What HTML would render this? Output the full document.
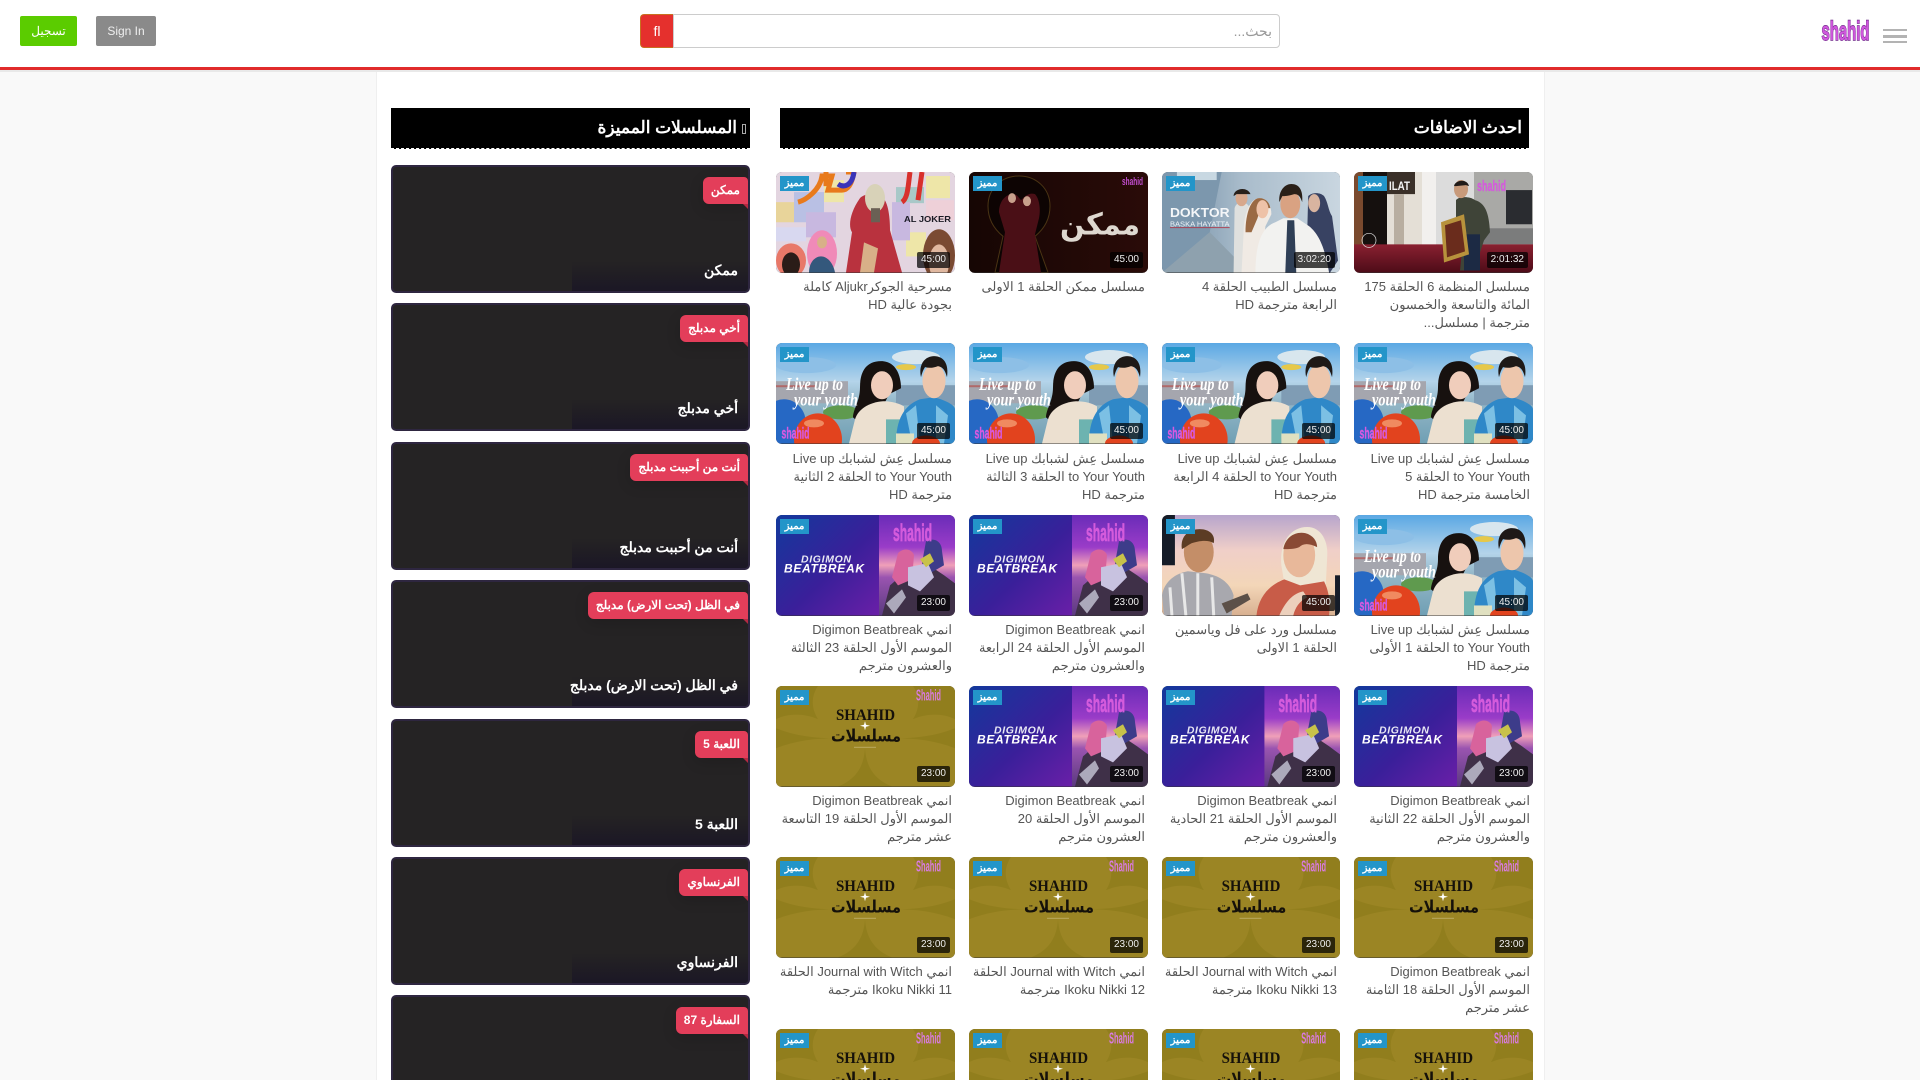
<!DOCTYPE html>
<html lang="ar">
<head>
<meta charset="utf-8">
<title>shahid</title>
<style>
html,body{margin:0;padding:0;width:1920px;height:1080px;overflow:hidden;background:#f9f9f9;font-family:"Liberation Sans",sans-serif}
*{box-sizing:border-box}
#page{position:relative;width:1920px;height:1080px;overflow:hidden;background:#f9f9f9}
.abs{position:absolute}
#hdr{position:absolute;left:0;top:0;width:1920px;height:70px;background:#fff;border-bottom:3px solid #e12b2b}
#band{position:absolute;left:0;top:70px;width:1920px;height:2px;background:#e9e9e9}
#wrap{position:absolute;left:376px;top:72px;width:1169px;height:1008px;background:#fff;border-left:1px solid #efefef;border-right:1px solid #efefef}
.btn{position:absolute;top:16px;height:30px;border-radius:2px;color:#fff;font-size:12px;line-height:30px;text-align:center}
.hd{position:absolute;top:108px;height:41px;background:#000;color:#fff;font-weight:bold;font-size:17px;line-height:39px;text-align:right;direction:rtl;border-bottom:1px dashed #fff}
.hd span{display:inline-block;width:4px;height:10px;border:1px solid #aaa;margin-left:5px;vertical-align:-1px}
.c{position:absolute;width:179px}
.t{position:relative;width:100%;height:100.5px;border-radius:6px;overflow:hidden;background:#333}
.t svg{position:absolute;left:0;top:0;width:100%;height:100%;display:block;filter:blur(.35px)}
.m{position:absolute;left:4px;top:4px;width:29px;height:15px;background:#2395c9;color:#fff;font-size:10px;font-weight:bold;line-height:15px;text-align:center;direction:rtl}
.d{position:absolute;right:5px;bottom:5px;height:16px;padding:0 4px;border-radius:2px;background:rgba(0,0,0,.72);color:#eee;font-size:10px;line-height:16px}
.n{direction:rtl;text-align:right;color:#555;font-size:13px;line-height:18.3px;padding:5px 3px 0 3px;margin:0}
.r2 .n{padding-top:6px}
.s{position:absolute;left:391px;width:359px;height:128px;background:#252324;border:2px solid #2e2640;border-radius:5px;overflow:hidden}
.s i{position:absolute;right:0;bottom:0;width:176px;height:30px;background:linear-gradient(to bottom,rgba(27,23,37,0),#1b1725)}
.s b{position:absolute;right:10px;bottom:10px;color:#fff;font-size:14px;line-height:22px;direction:rtl;font-weight:bold}
.s u{position:absolute;right:0;top:10px;height:27px;padding:0 8px 0 8px;background:#e33e5a;color:#fff;font-size:12px;font-weight:bold;line-height:26px;text-decoration:none;border-radius:6px 4px 0 6px;direction:rtl;box-shadow:0 4px 14px rgba(0,0,0,.15)}
.s em{position:absolute;right:0;top:37px;width:0;height:0;border-top:5px solid #b32a42;border-left:5px solid transparent}
</style>
</head>
<body>
<div id="page">
<svg width="0" height="0" style="position:absolute">
<defs>
<linearGradient id="gSky" x1="0" y1="0" x2="0" y2="1"><stop offset="0" stop-color="#5aa8e4"/><stop offset=".38" stop-color="#b4d4ea"/><stop offset=".6" stop-color="#93b6c6"/><stop offset="1" stop-color="#6f9fb4"/></linearGradient>
<linearGradient id="gBlue" x1="0" y1="0" x2="1" y2="1"><stop offset="0" stop-color="#12399c"/><stop offset=".55" stop-color="#3a1f9a"/><stop offset="1" stop-color="#6a1fa8"/></linearGradient>
<linearGradient id="gPur" x1="0" y1="0" x2="0" y2="1"><stop offset="0" stop-color="#6a2cb8"/><stop offset=".32" stop-color="#9a3cc8"/><stop offset=".5" stop-color="#f0a0b8"/><stop offset=".62" stop-color="#9a54b0"/><stop offset="1" stop-color="#5a3a80"/></linearGradient>
<linearGradient id="gWard" x1="0" y1="0" x2="0" y2="1"><stop offset="0" stop-color="#b7a5cc"/><stop offset=".35" stop-color="#f0cfc8"/><stop offset=".7" stop-color="#f3d6b8"/><stop offset="1" stop-color="#d8b090"/></linearGradient>
<linearGradient id="gDok" x1="0" y1="0" x2="1" y2="0"><stop offset="0" stop-color="#6d8aa2"/><stop offset=".45" stop-color="#a9bccb"/><stop offset="1" stop-color="#c9d6e0"/></linearGradient>
<linearGradient id="gMum" x1="0" y1="0" x2="1" y2="0"><stop offset="0" stop-color="#160604"/><stop offset="1" stop-color="#2a0b08"/></linearGradient>
<linearGradient id="gFloor" x1="0" y1="0" x2="0" y2="1"><stop offset="0" stop-color="#8a2030"/><stop offset="1" stop-color="#4d0c18"/></linearGradient>

<symbol id="live" viewBox="0 0 179 100" preserveAspectRatio="none">
<rect width="179" height="100" fill="url(#gSky)"/>
<ellipse cx="140" cy="14" rx="24" ry="7" fill="#d8e6ee"/>
<ellipse cx="30" cy="22" rx="30" ry="8" fill="#8dbfe6"/>
<ellipse cx="130" cy="24" rx="10" ry="3" fill="#e6c84a"/>
<rect x="0" y="38" width="72" height="22" fill="#a5a6ae"/>
<rect x="0" y="42" width="40" height="2" fill="#b06a6a"/>
<rect x="120" y="42" width="59" height="20" fill="#7f9cb4"/>
<ellipse cx="65" cy="69" rx="18" ry="7" fill="#5f9a4e"/>
<ellipse cx="8" cy="80" rx="22" ry="24" fill="#2668c4"/>
<ellipse cx="42" cy="96" rx="24" ry="26" fill="#e2431e"/>
<ellipse cx="38" cy="80" rx="10" ry="4" fill="#f08a60"/>
<path d="M105 18c-16 0-21 12-21 26 0 14-7 22-7 30 5 5 15 6 20 9l16-32 12-6c0-14-6-27-20-27z" fill="#17110f"/>
<ellipse cx="106" cy="42" rx="11" ry="14" fill="#f0cdbb"/>
<path d="M95 32c4-5 14-5 22-2-1-8-8-12-14-10-4 2-7 6-8 12z" fill="#17110f"/>
<path d="M73 100l6-24c3-10 14-17 28-18 9 0 16 2 21 5l0 37z" fill="#ece0d0"/>
<rect x="110" y="76" width="14" height="24" fill="#6db3b0"/>
<path d="M120 100c0-24 8-38 24-44l14-2c12 3 21 8 21 12v34z" fill="#2f88c8"/>
<path d="M130 70l10-8 4 38h-8zM160 62l12 10-4 28h-8z" fill="#7cc0e4"/>
<ellipse cx="158" cy="38" rx="11.500" ry="17" fill="#edc6ac"/>
<path d="M145 34c-3-14 5-21 13-21 10 0 15 8 13 21-2-7-4-10-9-11-5 2-9 2-13 1-2 3-3 6-4 10z" fill="#1e1917"/>
<rect x="120" y="90" width="18" height="10" fill="#e0e0c0"/>
<ellipse cx="150" cy="100" rx="14" ry="8" fill="#e2431e"/>
<text x="10" y="47" font-family="Liberation Serif" font-style="italic" font-weight="bold" font-size="18" fill="#fff" textLength="57" lengthAdjust="spacingAndGlyphs">Live up to</text>
<text x="18" y="62" font-family="Liberation Serif" font-style="italic" font-weight="bold" font-size="18" fill="#fff" textLength="64" lengthAdjust="spacingAndGlyphs">your youth</text>
<text x="5.500" y="95" font-family="Liberation Sans" font-weight="bold" font-size="16" fill="#d65ae0" stroke="#d65ae0" stroke-width=".4" textLength="28" lengthAdjust="spacingAndGlyphs">shahid</text>
</symbol>

<symbol id="digi" viewBox="0 0 179 100" preserveAspectRatio="none">
<rect width="104" height="100" fill="url(#gBlue)"/>
<rect x="103" width="76" height="100" fill="url(#gPur)"/>
<path d="M106 100l8-30 14-12 14 6 14-12 12 8 11 8v32z" fill="#3f3048"/>
<path d="M122 38c6-6 14-4 16 2l-2 24-14 6-6-8z" fill="#d8639c"/>
<path d="M150 26c8-4 16 0 16 10l2 14-14 8-8-10z" fill="#3d3c8a"/>
<path d="M132 52l20-4 6 14-14 14-12-6z" fill="#c8c2e0"/>
<path d="M144 44l10-6 4 8-8 6z" fill="#c8c24a"/>
<path d="M110 88l16-14 4 8-12 16z" fill="#c8c8d8" opacity=".8"/>
<text x="25" y="47.500" font-family="Liberation Sans" font-style="italic" font-weight="bold" font-size="10.500" fill="#e8e8f4" textLength="50">DIGIMON</text>
<text x="8" y="57" font-family="Liberation Sans" font-style="italic" font-weight="bold" font-size="12" fill="#fff" textLength="80">BEATBREAK</text>
<text x="117" y="26" font-family="Liberation Sans" font-weight="bold" font-size="24" fill="#d45bdc" stroke="#d45bdc" stroke-width=".7" textLength="39" lengthAdjust="spacingAndGlyphs">shahid</text>
</symbol>

<symbol id="gold" viewBox="0 0 179 100" preserveAspectRatio="none">
<rect width="179" height="100" fill="#9b8524"/>
<path d="M0 0H42C35 10 35 22 42 33 28 27 12 27 0 33ZM179 0H137C144 10 144 22 137 33 151 27 167 27 179 33Z" fill="#917e1d"/>
<path d="M0 42C20 50 40 52 60 52 40 52 20 54 0 62ZM179 42C159 50 139 52 119 52 139 52 159 54 179 62Z" fill="#917e1d"/>
<path d="M89 62C90 80 98 93 116 100H62C80 93 88 80 89 62Z" fill="#917e1d"/>
<text x="60" y="34" font-family="Liberation Serif" font-weight="bold" font-size="16" fill="#15110a" textLength="59" lengthAdjust="spacingAndGlyphs">SHAHID</text>
<path d="M89 35l1 3.500 4 1-4 1-1 3.500-1-3.500-4-1 4-1z" fill="#fff"/>
<text x="90" y="55" text-anchor="middle" direction="rtl" font-family="DejaVu Sans" font-weight="bold" font-size="17" fill="#15110a" textLength="70" lengthAdjust="spacingAndGlyphs">مسلسلات</text>
<rect x="78" y="60.500" width="22" height="1" fill="#e8e0b8" opacity=".4"/>
<text x="140" y="14.500" font-family="Liberation Sans" font-weight="bold" font-size="16" fill="#da7be0" textLength="25" lengthAdjust="spacingAndGlyphs">Shahid</text>
</symbol>

<symbol id="silat" viewBox="0 0 179 100" preserveAspectRatio="none">
<rect width="179" height="100" fill="#cfcac4"/>
<rect width="10" height="80" fill="#7a4a2e"/>
<rect x="9" width="24" height="78" fill="#15100e"/>
<rect x="33" width="36" height="78" fill="#e4dfd6"/>
<rect x="33" width="28" height="22" fill="#3a3028"/>
<rect x="40" y="22" width="10" height="56" fill="#b8aea0"/>
<rect x="68" width="14" height="80" fill="#f2f0ee"/>
<rect x="82" width="38" height="72" fill="#dcdcdc"/>
<rect x="120" width="59" height="58" fill="#a9a9a6"/>
<rect x="152" y="18" width="26" height="34" fill="#2a2c30"/>
<rect x="120" y="56" width="59" height="16" fill="#7b7c7c"/>
<rect y="72" width="179" height="28" fill="url(#gFloor)"/>
<path d="M102 28c3-4 14-4 19 0 10 3 14 12 15 32l-6 8-10 30h-14l4-40-8-12z" fill="#3f4438"/>
<ellipse cx="107" cy="17" rx="7" ry="9" fill="#c89a7a"/>
<path d="M100 14c1-6 13-8 15 0l-3-1-10 1z" fill="#211b18"/>
<rect x="110" y="62" width="16" height="36" fill="#1c2a44"/>
<path d="M87 50l23-8 5 40-25 8z" fill="#b8923c"/>
<path d="M91 53l16-5 4 31-18 6z" fill="#6a2c1c"/>
<text x="35" y="18" font-family="Liberation Sans" font-weight="bold" font-size="12" fill="#f4f4f4" textLength="21" lengthAdjust="spacingAndGlyphs">ILAT</text>
<text x="123" y="19" font-family="Liberation Sans" font-weight="bold" font-size="15" fill="#d45bdc" stroke="#d45bdc" stroke-width=".4" textLength="29" lengthAdjust="spacingAndGlyphs">shahid</text>
<circle cx="15" cy="68" r="7" fill="none" stroke="#ddd" stroke-width=".7"/>
</symbol>

<symbol id="dok" viewBox="0 0 179 100" preserveAspectRatio="none">
<rect width="179" height="100" fill="url(#gDok)"/>
<path d="M0 0h60L48 60 0 100z" fill="#7c97ad"/>
<path d="M48 60l40 40H0z" fill="#8ea1ae"/>
<rect x="15" width="40" height="8" fill="#c8d8e2"/>
<path d="M147 24c4-4 12-4 16 0 4 6 4 14 8 20l6 44-8 12h-24z" fill="#384262"/>
<ellipse cx="153" cy="31" rx="6" ry="9" fill="#d8b4a0"/>
<path d="M73 36c2-8 14-8 16 2l4 14v48H72z" fill="#dfe0de"/>
<ellipse cx="80" cy="26" rx="6" ry="8" fill="#d8a88c"/>
<path d="M72 24c0-8 14-10 17-2l-3 0-11 0z" fill="#28201a"/>
<path d="M82 62c0-24 8-36 16-36 8 0 12 8 12 16l-6 12-4 46H80z" fill="#f0eae4"/>
<path d="M84 60c0-20 6-34 14-34 6 0 10 4 11 10-8 0-11 4-13 10l-6 14z" fill="#9a6a44"/>
<ellipse cx="101" cy="37" rx="6" ry="9" fill="#eec2a8"/>
<path d="M94 100c0-32 8-46 20-50l8-4 14 0 12 8c10 8 16 22 20 46z" fill="#f2f2f0"/>
<path d="M126 48h7l2 52h-11z" fill="#2f3f56"/>
<ellipse cx="129" cy="32" rx="10" ry="14" fill="#d9a282"/>
<path d="M118 30c-1-12 6-18 12-18 8 0 12 6 11 18-2-6-4-8-8-8-6 2-10 2-12 2z" fill="#2a2018"/>
<text x="8" y="45" font-family="Liberation Sans" font-weight="bold" font-size="13" fill="#f4f6f8" textLength="60" lengthAdjust="spacingAndGlyphs">DOKTOR</text>
<text x="8" y="54" font-family="Liberation Sans" font-size="7" fill="#eef2f6" textLength="60" lengthAdjust="spacingAndGlyphs">BASKA HAYATTA</text>
<rect x="8" y="55" width="60" height=".8" fill="#b03040"/>
</symbol>

<symbol id="mum" viewBox="0 0 179 100" preserveAspectRatio="none">
<rect width="179" height="100" fill="url(#gMum)"/>
<path d="M26 100l8-36c-10-8-15-18-15-30C19 16 33 4 50 4s31 12 31 30c0 12-5 22-15 30l13 36z" fill="#0d0403" stroke="#4a3414" stroke-width="1"/>
<path d="M30 40c0-10 6-18 14-18 4 0 6 4 8 6 4-4 8-8 14-6 4 4 6 14 4 24l-4 16 6 38H30l6-40z" fill="#4a0f16"/>
<ellipse cx="43" cy="26" rx="4" ry="5" fill="#c8a08c"/>
<ellipse cx="58" cy="29" rx="4" ry="5" fill="#c8a08c"/>
<text x="131" y="62" text-anchor="middle" direction="rtl" font-family="DejaVu Sans" font-weight="bold" font-size="30" fill="#ded8d0" textLength="80" lengthAdjust="spacingAndGlyphs">ممكن</text>
<text x="153" y="13" font-family="Liberation Sans" font-weight="bold" font-size="11" fill="#c24ed0" textLength="21" lengthAdjust="spacingAndGlyphs">shahid</text>
</symbol>

<symbol id="joker" viewBox="0 0 179 100" preserveAspectRatio="none">
<rect width="179" height="100" fill="#e3d5e0"/>
<rect y="30" width="18" height="20" fill="#e8d49a"/><rect x="18" y="20" width="30" height="30" fill="#b9c0e4"/><rect x="48" y="8" width="20" height="22" fill="#eee6a8"/><rect x="30" y="40" width="30" height="25" fill="#c8b8e0"/><rect x="120" y="15" width="28" height="16" fill="#a8c8c8"/><rect x="150" y="4" width="24" height="22" fill="#eee6a8"/><rect x="130" y="60" width="20" height="24" fill="#eee6a8"/><rect x="116" y="30" width="18" height="38" fill="#c8b8e0"/><rect x="0" y="55" width="30" height="14" fill="#d8d8f0"/><rect x="150" y="28" width="28" height="20" fill="#eed0d8"/>
<path d="M22 30c8-2 22-12 24-26l10 0-4 14 14 0c6 0 10-6 12-18h-8M50 0l0 14" fill="none" stroke="#e87a1c" stroke-width="5"/>
<path d="M62 12c6 4 14 2 16-12" fill="none" stroke="#3a34b8" stroke-width="5"/>
<path d="M134 0c-2 14-2 26-8 30M146 0l-4 28" fill="none" stroke="#d8302c" stroke-width="5"/>
<path d="M70 100l6-40c-4-6-2-20 8-34 4-4 14-6 20-2 8 2 10 20 10 34l12 42z" fill="#b9323e"/>
<ellipse cx="99" cy="26" rx="10" ry="14" fill="#d8d2b8"/>
<rect x="95" y="36" width="9" height="14" fill="#6a6054"/>
<path d="M88 70l14 6-4 24H84z" fill="#d8b088"/>
<ellipse cx="46" cy="81" rx="15" ry="23" fill="#f08ab8"/>
<path d="M33 100c0-10 6-16 12-16s12 6 14 16z" fill="#34587c"/>
<ellipse cx="46" cy="70" rx="5" ry="6" fill="#d8b088"/>
<ellipse cx="15" cy="88" rx="15" ry="17" fill="#e87868"/>
<ellipse cx="15" cy="92" rx="9" ry="12" fill="#2a1c18"/>
<ellipse cx="163" cy="83" rx="16" ry="26" fill="#7a4a32"/>
<ellipse cx="163" cy="90" rx="10" ry="18" fill="#e0b8a0"/>
<text x="128" y="50" font-family="Liberation Sans" font-weight="bold" font-size="8.500" fill="#1a1a24" textLength="47" lengthAdjust="spacingAndGlyphs">AL JOKER</text>
</symbol>

<symbol id="ward" viewBox="0 0 179 100" preserveAspectRatio="none">
<rect width="179" height="100" fill="url(#gWard)"/>
<rect width="13" height="50" fill="#151c28"/>
<rect x="174" y="60" width="5" height="40" fill="#151c28"/>
<path d="M0 80c2-14 14-22 26-24l18 2c12 2 24 8 28 22l-2 20H2z" fill="#a8a8ae"/>
<path d="M20 58l4 42M36 58v42M50 62l2 38M8 72l2 28" stroke="#e8e8e8" stroke-width="3"/>
<ellipse cx="37" cy="37" rx="15" ry="20" fill="#c48e68"/>
<path d="M20 34c-2-14 8-20 18-20 10 0 16 6 14 14-6-4-16-2-22 0-4 2-6 4-10 6z" fill="#5c3c24"/>
<path d="M60 88l26-10 3 6-24 14z" fill="#5c5048"/>
<path d="M120 50c-2-24 10-38 26-38 14 0 22 14 20 32l-2 40-40-10z" fill="#efe6d4"/>
<ellipse cx="138" cy="40" rx="16" ry="22" fill="#e8b89a"/>
<path d="M122 34c2-12 12-18 22-16 8 2 12 8 12 14-8-4-14-4-18 0-4 2-10 2-16 2z" fill="#8a4a34"/>
<path d="M95 100c2-18 12-30 28-36l16 6 24-4c6 12 6 24 5 34z" fill="#c85c48"/>
<path d="M118 100c6-14 14-22 24-24l4 6c-8 4-12 10-14 18z" fill="#ecd0bc"/>
</symbol>
</defs>
</svg>

<div id="hdr"></div>
<div id="band"></div>
<div id="wrap"></div>

<div class="btn" style="left:20px;width:57px;background:#5bcc00">تسجيل</div>
<div class="btn" style="left:96px;width:60px;background:#8a8a8a;color:#eee">Sign In</div>

<div class="abs" style="left:640px;top:14px;width:33px;height:34px;background:#e5302d;border:1px solid #c9701f;border-right:0;border-radius:4px 0 0 4px;color:#fff;font-size:14px;line-height:32px;text-align:center">&#xfb02;</div>
<div class="abs" style="left:673px;top:14px;width:607px;height:34px;background:#fff;border:1px solid #ccc;border-radius:0 4px 4px 0;color:#999;font-size:14px;line-height:33px;text-align:right;direction:rtl;padding-right:7px">بحث...</div>

<svg class="abs" style="left:1821px;top:17px" width="49" height="26" viewBox="0 0 49 26"><text x="0.5" y="23" font-family="Liberation Sans" font-weight="bold" font-size="27" fill="#5a1a78" stroke="#5a1a78" stroke-width="1.4" textLength="48" lengthAdjust="spacingAndGlyphs">shahid</text><text x="0.5" y="23" font-family="Liberation Sans" font-weight="bold" font-size="27" fill="#cf58dc" stroke="#cf58dc" stroke-width=".3" textLength="48" lengthAdjust="spacingAndGlyphs">shahid</text></svg>
<div class="abs" style="left:1883px;top:29px;width:24px;height:2px;background:#b3b3b3"></div>
<div class="abs" style="left:1883px;top:35px;width:24px;height:3px;background:#b3b3b3"></div>
<div class="abs" style="left:1883px;top:41px;width:24px;height:2px;background:#b3b3b3"></div>

<div class="hd" style="left:391px;width:359px;padding-right:4px"><span></span>المسلسلات المميزة</div>
<div class="hd" style="left:780px;width:749px;padding-right:7px">احدث الاضافات</div>

<div class="s" style="top:165px"><i></i><u>ممكن</u><em></em><b>ممكن</b></div>
<div class="s" style="top:303px"><i></i><u>أخي مدبلج</u><em></em><b>أخي مدبلج</b></div>
<div class="s" style="top:442px"><i></i><u>أنت من أحببت مدبلج</u><em></em><b>أنت من أحببت مدبلج</b></div>
<div class="s" style="top:580px"><i></i><u>في الظل (تحت الارض) مدبلج</u><em></em><b>في الظل (تحت الارض) مدبلج</b></div>
<div class="s" style="top:718.5px"><i></i><u>اللعبة 5</u><em></em><b>اللعبة 5</b></div>
<div class="s" style="top:857px"><i></i><u>الفرنساوي</u><em></em><b>الفرنساوي</b></div>
<div class="s" style="top:995px"><i></i><u>السفارة 87</u><em></em><b>السفارة 87</b></div>

<!-- row 1 -->
<div class="c" style="left:1354px;top:172px"><div class="t"><svg><use href="#silat"/></svg><span class="m">مميز</span><span class="d">2:01:32</span></div><p class="n">مسلسل المنظمة 6 الحلقة 175 المائة والتاسعة والخمسون مترجمة | مسلسل...</p></div>
<div class="c" style="left:1162px;top:172px;width:178px"><div class="t"><svg><use href="#dok"/></svg><span class="m">مميز</span><span class="d">3:02:20</span></div><p class="n">مسلسل الطبيب الحلقة 4 الرابعة مترجمة HD</p></div>
<div class="c" style="left:969px;top:172px"><div class="t"><svg><use href="#mum"/></svg><span class="m">مميز</span><span class="d">45:00</span></div><p class="n">مسلسل ممكن الحلقة 1 الاولى</p></div>
<div class="c" style="left:776px;top:172px"><div class="t"><svg><use href="#joker"/></svg><span class="m">مميز</span><span class="d">45:00</span></div><p class="n">مسرحية الجوكرAljukr كاملة بجودة عالية HD</p></div>
<!-- row 2 -->
<div class="c r2" style="left:1354px;top:343px"><div class="t"><svg><use href="#live"/></svg><span class="m">مميز</span><span class="d">45:00</span></div><p class="n">مسلسل عِش لشبابك Live up to Your Youth الحلقة 5 الخامسة مترجمة HD</p></div>
<div class="c r2" style="left:1162px;top:343px;width:178px"><div class="t"><svg><use href="#live"/></svg><span class="m">مميز</span><span class="d">45:00</span></div><p class="n">مسلسل عِش لشبابك Live up to Your Youth الحلقة 4 الرابعة مترجمة HD</p></div>
<div class="c r2" style="left:969px;top:343px"><div class="t"><svg><use href="#live"/></svg><span class="m">مميز</span><span class="d">45:00</span></div><p class="n">مسلسل عِش لشبابك Live up to Your Youth الحلقة 3 الثالثة مترجمة HD</p></div>
<div class="c r2" style="left:776px;top:343px"><div class="t"><svg><use href="#live"/></svg><span class="m">مميز</span><span class="d">45:00</span></div><p class="n">مسلسل عِش لشبابك Live up to Your Youth الحلقة 2 الثانية مترجمة HD</p></div>
<!-- row 3 -->
<div class="c" style="left:1354px;top:515px"><div class="t"><svg><use href="#live"/></svg><span class="m">مميز</span><span class="d">45:00</span></div><p class="n">مسلسل عِش لشبابك Live up to Your Youth الحلقة 1 الأولى مترجمة HD</p></div>
<div class="c" style="left:1162px;top:515px;width:178px"><div class="t"><svg><use href="#ward"/></svg><span class="m">مميز</span><span class="d">45:00</span></div><p class="n">مسلسل ورد على فل وياسمين الحلقة 1 الاولى</p></div>
<div class="c" style="left:969px;top:515px"><div class="t"><svg><use href="#digi"/></svg><span class="m">مميز</span><span class="d">23:00</span></div><p class="n">انمي Digimon Beatbreak الموسم الأول الحلقة 24 الرابعة والعشرون مترجم</p></div>
<div class="c" style="left:776px;top:515px"><div class="t"><svg><use href="#digi"/></svg><span class="m">مميز</span><span class="d">23:00</span></div><p class="n">انمي Digimon Beatbreak الموسم الأول الحلقة 23 الثالثة والعشرون مترجم</p></div>
<!-- row 4 -->
<div class="c" style="left:1354px;top:686px"><div class="t"><svg><use href="#digi"/></svg><span class="m">مميز</span><span class="d">23:00</span></div><p class="n">انمي Digimon Beatbreak الموسم الأول الحلقة 22 الثانية والعشرون مترجم</p></div>
<div class="c" style="left:1162px;top:686px;width:178px"><div class="t"><svg><use href="#digi"/></svg><span class="m">مميز</span><span class="d">23:00</span></div><p class="n">انمي Digimon Beatbreak الموسم الأول الحلقة 21 الحادية والعشرون مترجم</p></div>
<div class="c" style="left:969px;top:686px"><div class="t"><svg><use href="#digi"/></svg><span class="m">مميز</span><span class="d">23:00</span></div><p class="n">انمي Digimon Beatbreak الموسم الأول الحلقة 20 العشرون مترجم</p></div>
<div class="c" style="left:776px;top:686px"><div class="t"><svg><use href="#gold"/></svg><span class="m">مميز</span><span class="d">23:00</span></div><p class="n">انمي Digimon Beatbreak الموسم الأول الحلقة 19 التاسعة عشر مترجم</p></div>
<!-- row 5 -->
<div class="c" style="left:1354px;top:857px"><div class="t"><svg><use href="#gold"/></svg><span class="m">مميز</span><span class="d">23:00</span></div><p class="n">انمي Digimon Beatbreak الموسم الأول الحلقة 18 الثامنة عشر مترجم</p></div>
<div class="c" style="left:1162px;top:857px;width:178px"><div class="t"><svg><use href="#gold"/></svg><span class="m">مميز</span><span class="d">23:00</span></div><p class="n" style="padding-left:0">انمي Journal with Witch الحلقة Ikoku Nikki 13 مترجمة</p></div>
<div class="c" style="left:969px;top:857px"><div class="t"><svg><use href="#gold"/></svg><span class="m">مميز</span><span class="d">23:00</span></div><p class="n">انمي Journal with Witch الحلقة Ikoku Nikki 12 مترجمة</p></div>
<div class="c" style="left:776px;top:857px"><div class="t"><svg><use href="#gold"/></svg><span class="m">مميز</span><span class="d">23:00</span></div><p class="n">انمي Journal with Witch الحلقة Ikoku Nikki 11 مترجمة</p></div>
<!-- row 6 -->
<div class="c" style="left:1354px;top:1029px"><div class="t"><svg><use href="#gold"/></svg><span class="m">مميز</span></div></div>
<div class="c" style="left:1162px;top:1029px;width:178px"><div class="t"><svg><use href="#gold"/></svg><span class="m">مميز</span></div></div>
<div class="c" style="left:969px;top:1029px"><div class="t"><svg><use href="#gold"/></svg><span class="m">مميز</span></div></div>
<div class="c" style="left:776px;top:1029px"><div class="t"><svg><use href="#gold"/></svg><span class="m">مميز</span></div></div>
</div>
</body>
</html>
